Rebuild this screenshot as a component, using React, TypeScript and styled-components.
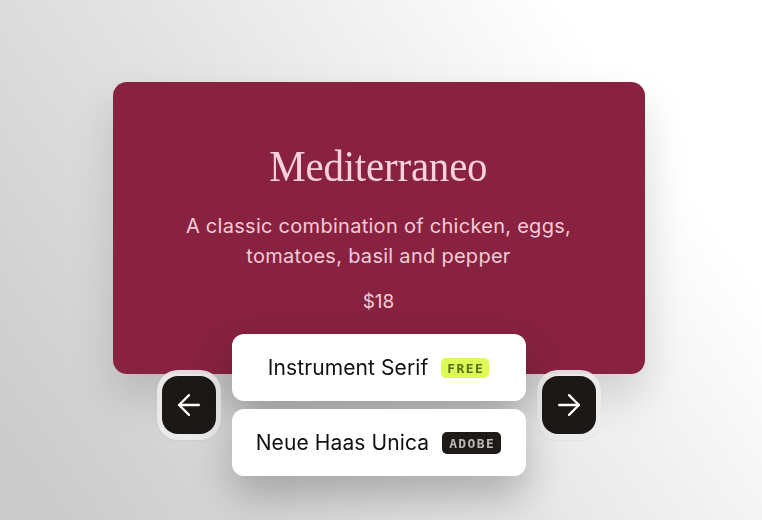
import styled, { createGlobalStyle } from 'styled-components';
import { ArrowLeft, ArrowRight } from 'lucide-react';

const GlobalStyle = createGlobalStyle`
  html, body {
    margin: 0;
    padding: 0;
  }
  body {
    font-family: 'Inter', 'Liberation Sans', sans-serif;
  }
`;

const Page = styled.div`
  width: 762px;
  height: 520px;
  overflow: hidden;
  box-sizing: border-box;
  padding-top: 82px;
  display: flex;
  flex-direction: column;
  align-items: center;
  background: linear-gradient(235deg, #ffffff 18%, #e4e4e4 55%, #cbcbcb 95%);
`;

const Stage = styled.div`
  display: flex;
  flex-direction: column;
  align-items: center;
  margin-left: -5px;
`;

const Card = styled.div`
  width: 532px;
  height: 292px;
  box-sizing: border-box;
  padding-top: 61px;
  border-radius: 14px;
  background: #882240;
  box-shadow: 0 22px 44px rgba(0, 0, 0, 0.14);
  display: flex;
  flex-direction: column;
  align-items: center;
  text-align: center;
`;

const Title = styled.h1`
  margin: 0;
  font-family: 'Liberation Serif', serif;
  font-weight: 400;
  font-size: 44px;
  line-height: 48px;
  letter-spacing: -0.2px;
  color: #f7d2de;
  transform: scaleX(0.93);
`;

const Description = styled.p`
  margin: 20px 0 0;
  width: 440px;
  font-family: 'Inter', sans-serif;
  font-size: 20px;
  line-height: 30px;
  letter-spacing: 0.28px;
  color: #f2cbd8;
`;

const Price = styled.div`
  margin-top: 19px;
  font-family: 'Inter', sans-serif;
  font-size: 19px;
  line-height: 24px;
  color: #f2cbd8;
`;

const Controls = styled.div`
  margin-top: -40px;
  position: relative;
  display: flex;
  align-items: center;
  gap: 11px;
`;

const Ring = styled.div`
  padding: 6px 5px;
  border-radius: 21px;
  background: rgba(236, 236, 236, 0.92);
  box-shadow: 0 1px 2px rgba(0, 0, 0, 0.05);
`;

const NavButton = styled.button`
  width: 54px;
  height: 58px;
  border: none;
  border-radius: 16px;
  background: #1c1816;
  color: #ffffff;
  display: flex;
  align-items: center;
  justify-content: center;
  cursor: pointer;
  padding: 0;
`;

const Stack = styled.div`
  display: flex;
  flex-direction: column;
  gap: 8px;
  filter: drop-shadow(0 20px 20px rgba(0, 0, 0, 0.24));
`;

const FontPill = styled.div`
  width: 294px;
  height: 67px;
  border-radius: 12px;
  background: #ffffff;
  display: flex;
  align-items: center;
  justify-content: center;
  gap: 13px;
`;

const FontName = styled.span`
  font-family: 'Inter', 'Open Sans', sans-serif;
  font-size: 21px;
  letter-spacing: 0.1px;
  color: #111111;
`;

const Badge = styled.span<{ $variant: 'free' | 'adobe' }>`
  font-family: 'DejaVu Sans Mono', monospace;
  font-weight: 700;
  font-size: 13px;
  letter-spacing: 1.4px;
  line-height: 15px;
  padding: ${(p) => (p.$variant === 'free' ? '3px 5px 2px 6px' : '4px 6px 3px 7px')};
  border-radius: 5px;
  background: ${(p) => (p.$variant === 'free' ? '#dcfb57' : '#1e1a18')};
  color: ${(p) => (p.$variant === 'free' ? '#5c6c14' : '#bdb8b3')};
`;

const fonts: { name: string; badge: 'free' | 'adobe'; label: string }[] = [
  { name: 'Instrument Serif', badge: 'free', label: 'FREE' },
  { name: 'Neue Haas Unica', badge: 'adobe', label: 'ADOBE' },
];

export default function App() {
  return (
    <Page>
      <GlobalStyle />
      <Stage>
        <Card>
          <Title>Mediterraneo</Title>
          <Description>
            A classic combination of chicken, eggs, tomatoes, basil and pepper
          </Description>
          <Price>$18</Price>
        </Card>
        <Controls>
          <Ring>
            <NavButton aria-label="Previous">
              <ArrowLeft size={34} strokeWidth={1.6} />
            </NavButton>
          </Ring>
          <Stack>
            {fonts.map((f) => (
              <FontPill key={f.name}>
                <FontName>{f.name}</FontName>
                <Badge $variant={f.badge}>{f.label}</Badge>
              </FontPill>
            ))}
          </Stack>
          <Ring>
            <NavButton aria-label="Next">
              <ArrowRight size={34} strokeWidth={1.6} />
            </NavButton>
          </Ring>
        </Controls>
      </Stage>
    </Page>
  );
}
